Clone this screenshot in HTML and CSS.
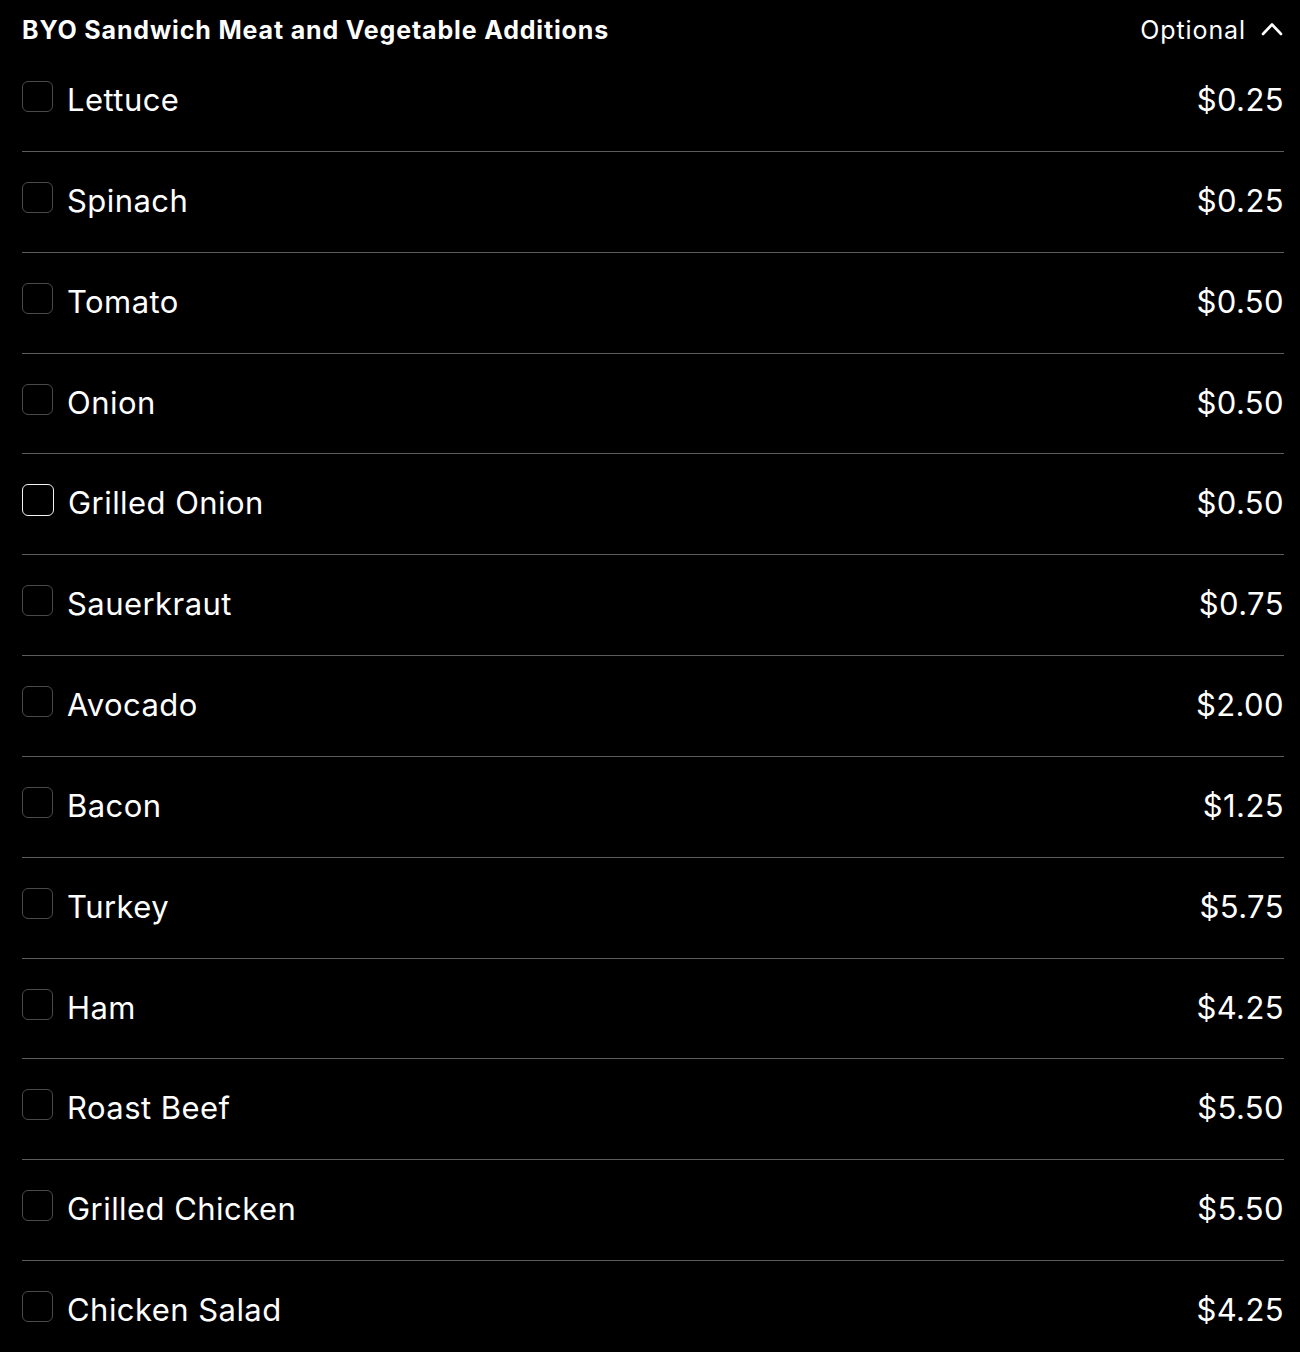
FILE: index.html
```html
<!DOCTYPE html>
<html lang="en">
<head>
<meta charset="UTF-8">
<meta name="viewport" content="width=device-width, initial-scale=1.0">
<title>BYO Sandwich Additions</title>
<link rel="stylesheet" href="styles.css">
</head>
<body>

<div class="group">
  <div class="group-head">
    <h2>BYO Sandwich Meat and Vegetable Additions</h2>
    <div class="group-meta">
      <span>Optional</span>
      <svg class="chevron" width="22" height="16" viewBox="0 0 22 16"><path d="M2 13 L11 3.5 L20 13" fill="none" stroke="#fff" stroke-width="2.6" stroke-linecap="round" stroke-linejoin="round"/></svg>
    </div>
  </div>

  <ul class="options">
    <li class="option"><span class="box"></span><span class="name">Lettuce</span><span class="price">$0.25</span></li>
    <li class="option"><span class="box"></span><span class="name">Spinach</span><span class="price">$0.25</span></li>
    <li class="option"><span class="box"></span><span class="name">Tomato</span><span class="price">$0.50</span></li>
    <li class="option"><span class="box"></span><span class="name">Onion</span><span class="price">$0.50</span></li>
    <li class="option"><span class="box hover"></span><span class="name">Grilled Onion</span><span class="price">$0.50</span></li>
    <li class="option"><span class="box"></span><span class="name">Sauerkraut</span><span class="price">$0.75</span></li>
    <li class="option"><span class="box"></span><span class="name">Avocado</span><span class="price">$2.00</span></li>
    <li class="option"><span class="box"></span><span class="name">Bacon</span><span class="price">$1.25</span></li>
    <li class="option"><span class="box"></span><span class="name">Turkey</span><span class="price">$5.75</span></li>
    <li class="option"><span class="box"></span><span class="name">Ham</span><span class="price">$4.25</span></li>
    <li class="option"><span class="box"></span><span class="name">Roast Beef</span><span class="price">$5.50</span></li>
    <li class="option"><span class="box"></span><span class="name">Grilled Chicken</span><span class="price">$5.50</span></li>
    <li class="option"><span class="box"></span><span class="name">Chicken Salad</span><span class="price">$4.25</span></li>
  </ul>
</div>

</body>
</html>
```

FILE: styles.css
```css
body { margin: 0; padding: 0; background-color: #000; color: #fff; font-family: Inter, "Noto Sans", sans-serif; }
.group { padding: 0 16px 0 22px; }
.group-head { display: flex; align-items: center; justify-content: space-between; height: 51px; padding-top: 8px; box-sizing: border-box; }
.group-head h2 { margin: 0; font-size: 25px; font-weight: 700; letter-spacing: 0.85px; }
.group-meta { display: flex; align-items: center; gap: 15px; font-size: 25px; letter-spacing: 0.9px; }
.chevron { margin-right: 1px; margin-top: -1px; }
.options { list-style: none; margin: 0; padding: 0; }
.option {
  display: flex;
  align-items: flex-start;
  height: 100.85px;
  box-sizing: border-box;
  padding-top: 30px;
  border-bottom: 1px solid #5c5c5c;
}
.option:last-child { border-bottom: none; }
.box {
  width: 31px;
  height: 31px;
  box-sizing: border-box;
  border: 1.5px solid #4a4a4a;
  border-radius: 6px;
  flex-shrink: 0;
}
.box.hover { border-color: #f2f2f2; width: 32px; height: 32px; }
.name { margin-left: 14px; font-size: 31px; line-height: 38px; margin-top: 0; letter-spacing: 0.45px; }
.price { margin-left: auto; font-size: 31px; line-height: 38px; margin-top: 0; letter-spacing: 0.4px; }
```
